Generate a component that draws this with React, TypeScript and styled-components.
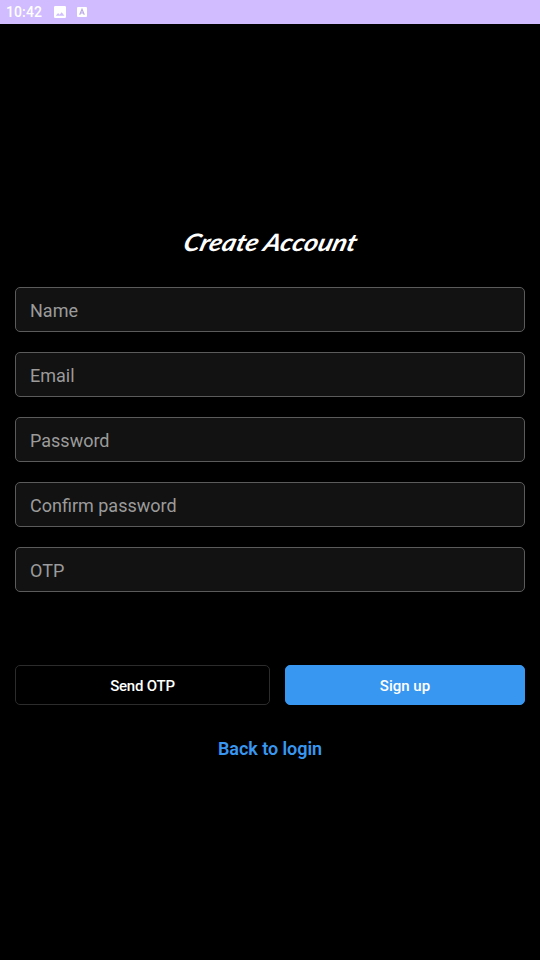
import React from 'react';
import styled, { createGlobalStyle } from 'styled-components';

const GlobalStyle = createGlobalStyle`
  * { box-sizing: border-box; }
  html, body { margin: 0; background: #000; }
  body, input, button { font-family: Roboto, sans-serif; }
`;

const Screen = styled.div`
  width: 540px;
  height: 960px;
  display: flex;
  flex-direction: column;
  background: #000;
  overflow: hidden;
`;

const StatusBar = styled.header`
  height: 24px;
  flex: none;
  display: flex;
  align-items: center;
  padding-left: 6px;
  background: #d0bcff;
  color: #fff;
`;

const Clock = styled.span`
  width: 47px;
  font-size: 14px;
  font-weight: 500;
  line-height: 24px;
  letter-spacing: 0.1px;
`;

const StatusIcon = styled.svg<{ $gap?: number }>`
  display: block;
  margin-right: ${({ $gap = 0 }) => $gap}px;
`;

const Content = styled.main`
  display: flex;
  flex-direction: column;
  align-items: stretch;
  padding: 203px 15px 0;
`;

const Title = styled.h1`
  margin: 0 0 30px;
  height: 30px;
  align-self: center;
  color: #fff;
  font-family: Lato, cursive;
  font-size: 24px;
  font-weight: 700;
  font-style: italic;
  line-height: 30px;
  padding-left: 2px;
  white-space: nowrap;
  transform: scaleX(1.11) skewX(-14deg);
`;

const Fields = styled.form`
  display: flex;
  flex-direction: column;
  gap: 20px;
`;

const Field = styled.input`
  width: 100%;
  height: 45px;
  padding: 1px 14px 0;
  border: 1px solid #5b5b5b;
  border-radius: 5px;
  outline: none;
  background: #121212;
  color: #fff;
  font-size: 18px;

  &::placeholder {
    color: #9b9b9b;
    opacity: 1;
  }
`;

const Actions = styled.div`
  display: grid;
  grid-template-columns: 255px 240px;
  gap: 15px;
  margin-top: 73px;
`;

const Button = styled.button<{ $primary?: boolean }>`
  height: 40px;
  padding: 2px 0 0;
  border: 1px solid ${({ $primary }) => ($primary ? '#3897f0' : '#2c2c2c')};
  border-radius: 5px;
  background: ${({ $primary }) => ($primary ? '#3897f0' : '#000')};
  color: #fff;
  font-size: 15px;
  font-weight: 500;
  letter-spacing: ${({ $primary }) => ($primary ? '0' : '-0.2px')};
`;

const LoginLink = styled.a`
  align-self: center;
  margin-top: 32px;
  color: #3897f0;
  font-size: 18px;
  font-weight: 600;
  line-height: 24px;
  letter-spacing: -0.05px;
  text-decoration: none;
`;

const placeholders = ['Name', 'Email', 'Password', 'Confirm password', 'OTP'];

export default function App() {
  return (
    <Screen>
      <GlobalStyle />
      <StatusBar>
        <Clock>10:42</Clock>
        <StatusIcon $gap={10} width="14" height="14" viewBox="0 0 14 14">
          <path
            fill="#fff"
            fillRule="evenodd"
            d="M2.3 1h9.4Q13 1 13 2.3v9.4q0 1.3-1.3 1.3H2.3Q1 13 1 11.700V2.300Q1 1 2.300 1ZM2.800 10.700h8.600L8.700 7.200 6.600 9.800 5.100 8Z"
          />
        </StatusIcon>
        <StatusIcon width="10" height="10" viewBox="0 0 10 10">
          <rect width="10" height="10" rx="1" fill="#fff" />
          <path
            d="M2.700 7.700 5 2.200 7.300 7.700M3.500 6h3"
            fill="none"
            stroke="#b9a7e4"
            strokeWidth="1.100"
          />
        </StatusIcon>
      </StatusBar>
      <Content>
        <Title>Create Account</Title>
        <Fields>
          {placeholders.map((label) => (
            <Field key={label} placeholder={label} aria-label={label} />
          ))}
        </Fields>
        <Actions>
          <Button type="button">Send OTP</Button>
          <Button type="button" $primary>
            Sign up
          </Button>
        </Actions>
        <LoginLink>Back to login</LoginLink>
      </Content>
    </Screen>
  );
}
